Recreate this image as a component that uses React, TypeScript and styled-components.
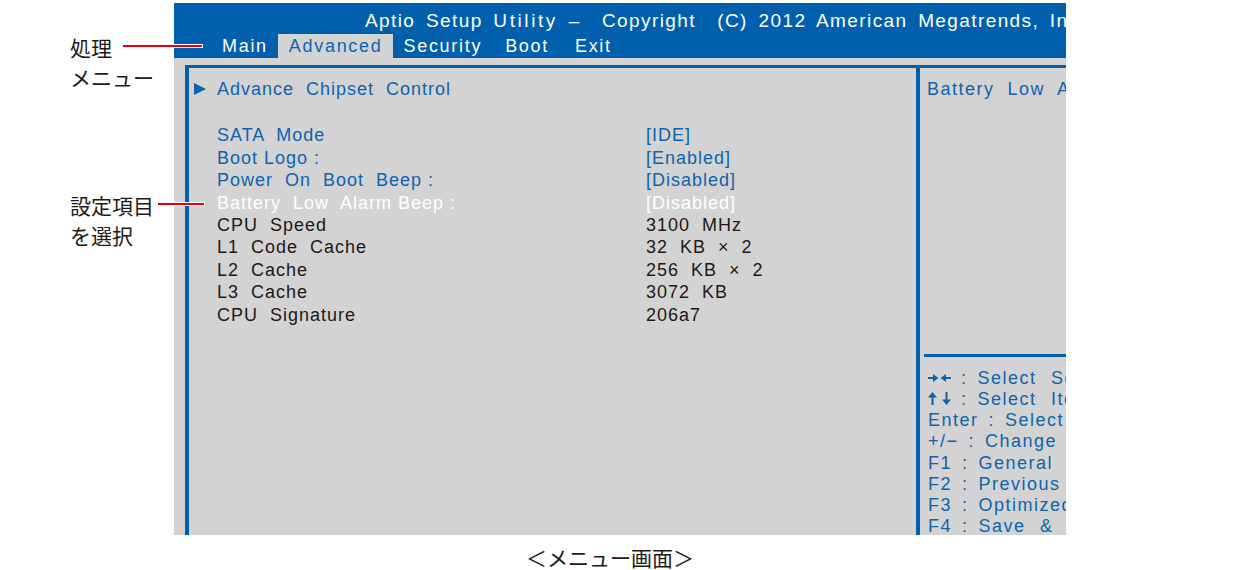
import styled, { createGlobalStyle } from "styled-components";

const BLUE = "#0060ae";
const LINK = "#0d63ae";
const GRAY = "#d3d3d3";
const INK = "#231815";
const RED = "#e60012";

const GlobalStyle = createGlobalStyle`
  html, body {
    margin: 0;
    padding: 0;
    background: #fff;
  }
  body {
    font-family: "Liberation Sans", Arial, sans-serif;
  }
`;

const Page = styled.div`
  width: 1240px;
  height: 570px;
  padding-top: 3px;
  box-sizing: border-box;
  overflow: hidden;
`;

const Figure = styled.div`
  display: flex;
`;

// left-hand annotations
const Notes = styled.div`
  width: 174px;
  flex: none;
  box-sizing: border-box;
  padding-left: 70px;
  font-family: "Noto Sans CJK JP", sans-serif;
  font-size: 21px;
  line-height: 30px;
  color: ${INK};
`;

const Note = styled.div<{ $top: number }>`
  margin-top: ${(p) => p.$top}px;
  white-space: nowrap;
`;

const Pointed = styled.span<{ $gap: number; $len: number }>`
  position: relative;

  &::after {
    content: "";
    position: absolute;
    z-index: 2;
    top: 50%;
    left: calc(100% + ${(p) => p.$gap}px);
    width: ${(p) => p.$len}px;
    height: 2px;
    margin-top: -2px;
    background: ${RED};
    box-shadow: 0 0 0 1px #fff;
  }
`;

// the BIOS screen
const Screen = styled.div`
  width: 892px;
  height: 532px;
  flex: none;
  display: flex;
  flex-direction: column;
  background: ${GRAY};
  overflow: hidden;
  font-size: 18px;
`;

const TitleBar = styled.div`
  height: 31px;
  flex: none;
  padding-left: 191px;
  background: ${BLUE};
  color: #fff;
  font-size: 19px;
  line-height: 36px;
  letter-spacing: 1.4px;
  word-spacing: 4px;
  white-space: pre;
  overflow: hidden;
`;

const Spread = styled.span`
  letter-spacing: 2.6px;
`;

const MenuBar = styled.div`
  height: 24px;
  flex: none;
  display: flex;
  padding-left: 37px;
  background: ${BLUE};
  line-height: 25px;
  letter-spacing: 1.7px;
`;

const Tab = styled.div<{ $active?: boolean; $lead?: number }>`
  padding: 0 10px 0 ${(p) => p.$lead ?? 11}px;
  color: ${(p) => (p.$active ? LINK : "#fff")};
  background: ${(p) => (p.$active ? GRAY : "transparent")};
`;

const Body = styled.div`
  flex: 1;
  min-height: 0;
  display: flex;
  padding: 7px 0 0 11px;
`;

const Frame = styled.div`
  flex: 1;
  display: flex;
  border-top: 3px solid ${BLUE};
  border-left: 4px solid ${BLUE};
`;

const MainPane = styled.div`
  width: 731px;
  flex: none;
  box-sizing: border-box;
  padding-top: 10px;
  border-right: 4px solid ${BLUE};
  letter-spacing: 1px;
`;

const Section = styled.div<{ $gap?: number }>`
  margin-top: ${(p) => p.$gap ?? 0}px;
`;

type Tone = "link" | "active" | "plain";

const toneColor: Record<Tone, string> = {
  link: LINK,
  active: "#ffffff",
  plain: INK,
};

const Row = styled.div<{ $tone: Tone }>`
  display: grid;
  grid-template-columns: 28px 429px auto;
  align-items: center;
  height: 22.4px;
  line-height: 22.4px;
  color: ${(p) => toneColor[p.$tone]};
  white-space: pre;
`;

const Marker = styled.span`
  width: 0;
  height: 0;
  margin-left: 5px;
  border-left: 12px solid ${LINK};
  border-top: 6.5px solid transparent;
  border-bottom: 6.5px solid transparent;
`;

const SidePane = styled.div`
  flex: 1;
  min-width: 0;
  display: flex;
  flex-direction: column;
  color: ${LINK};
  white-space: pre;
  overflow: hidden;
  letter-spacing: 1.5px;
`;

const HelpTitle = styled.div`
  height: 286px;
  flex: none;
  box-sizing: border-box;
  padding: 10px 0 0 7px;
  line-height: 22.4px;
`;

const Rule = styled.div`
  height: 3px;
  flex: none;
  margin-left: 4px;
  background: ${BLUE};
`;

const KeyList = styled.div`
  padding: 11px 0 0 8px;
  line-height: 21.15px;
  word-spacing: 3.5px;
`;

const KeyLine = styled.div`
  height: 21.15px;
`;

const KeyDesc = styled.span`
  word-spacing: 8px;
`;

const ArrowIcon = styled.svg`
  fill: ${LINK};
  vertical-align: middle;
  margin-top: -3px;
`;

const ArrowsLR = () => (
  <ArrowIcon width="23" height="8" viewBox="0 0 23 8">
    <path d="M0 3h6v2H0z M5 0l5.5 4L5 8z" />
    <path d="M23 3h-6v2h6z M18 0l-5.5 4L18 8z" />
  </ArrowIcon>
);

const ArrowsUD = () => (
  <ArrowIcon width="23" height="13" viewBox="0 0 23 13">
    <path d="M3.5 13V5h2v8z M0 5.5L4.5 0L9 5.5z" />
    <path d="M17.5 0v8h2V0z M14 7.5L18.5 13L23 7.5z" />
  </ArrowIcon>
);

const Caption = styled.div`
  width: 1220px;
  margin-top: 7px;
  text-align: center;
  font-family: "Noto Sans CJK JP", sans-serif;
  font-size: 21px;
  line-height: 30px;
  color: ${INK};
`;

// double spaces copy the wide gaps of the BIOS font
const settings: { label: string; value: string; tone: Tone }[] = [
  { label: "SATA  Mode", value: "[IDE]", tone: "link" },
  { label: "Boot Logo :", value: "[Enabled]", tone: "link" },
  { label: "Power  On  Boot  Beep :", value: "[Disabled]", tone: "link" },
  { label: "Battery  Low  Alarm Beep :", value: "[Disabled]", tone: "active" },
  { label: "CPU  Speed", value: "3100  MHz", tone: "plain" },
  { label: "L1  Code  Cache", value: "32  KB  ×  2", tone: "plain" },
  { label: "L2  Cache", value: "256  KB  ×  2", tone: "plain" },
  { label: "L3  Cache", value: "3072  KB", tone: "plain" },
  { label: "CPU  Signature", value: "206a7", tone: "plain" },
];

const keys: { key: React.ReactNode; desc: string }[] = [
  { key: <ArrowsLR />, desc: "Select Screen" },
  { key: <ArrowsUD />, desc: "Select Item" },
  { key: "Enter", desc: "Select" },
  { key: "+/−", desc: "Change Opt." },
  { key: "F1", desc: "General Help" },
  { key: "F2", desc: "Previous Values" },
  { key: "F3", desc: "Optimized Defaults" },
  { key: "F4", desc: "Save & Exit" },
];

const tabs: { name: string; lead?: number }[] = [
  { name: "Main" },
  { name: "Advanced" },
  { name: "Security" },
  { name: "Boot", lead: 13 },
  { name: "Exit", lead: 16 },
];

const App: React.FC = () => {
  return (
    <Page>
      <GlobalStyle />
      <Figure>
        <Notes>
          <Note $top={29}>
            <Pointed $gap={11} $len={79}>処理</Pointed>
            <br />
            メニュー
          </Note>
          <Note $top={98}>
            <Pointed $gap={4} $len={46}>設定項目</Pointed>
            <br />
            を選択
          </Note>
        </Notes>

        <Screen>
          <TitleBar>
            {"Aptio Setup "}
            <Spread>Utility</Spread>
            {" –  Copyright  (C) 2012 American Megatrends, Inc."}
          </TitleBar>
          <MenuBar>
            {tabs.map((t) => (
              <Tab key={t.name} $active={t.name === "Advanced"} $lead={t.lead}>
                {t.name}
              </Tab>
            ))}
          </MenuBar>
          <Body>
            <Frame>
              <MainPane>
                <Section>
                  <Row $tone="link">
                    <Marker />
                    <span>{"Advance  Chipset  Control"}</span>
                  </Row>
                </Section>
                <Section $gap={24}>
                  {settings.map((s) => (
                    <Row key={s.label} $tone={s.tone}>
                      <span />
                      <span>{s.label}</span>
                      <span>{s.value}</span>
                    </Row>
                  ))}
                </Section>
              </MainPane>
              <SidePane>
                <HelpTitle>{"Battery  Low  Alarm Beep"}</HelpTitle>
                <Rule />
                <KeyList>
                  {keys.map((k) => (
                    <KeyLine key={k.desc}>
                      {k.key}
                      {" : "}
                      <KeyDesc>{k.desc}</KeyDesc>
                    </KeyLine>
                  ))}
                </KeyList>
              </SidePane>
            </Frame>
          </Body>
        </Screen>
      </Figure>
      <Caption>＜メニュー画面＞</Caption>
    </Page>
  );
};

export default App;
